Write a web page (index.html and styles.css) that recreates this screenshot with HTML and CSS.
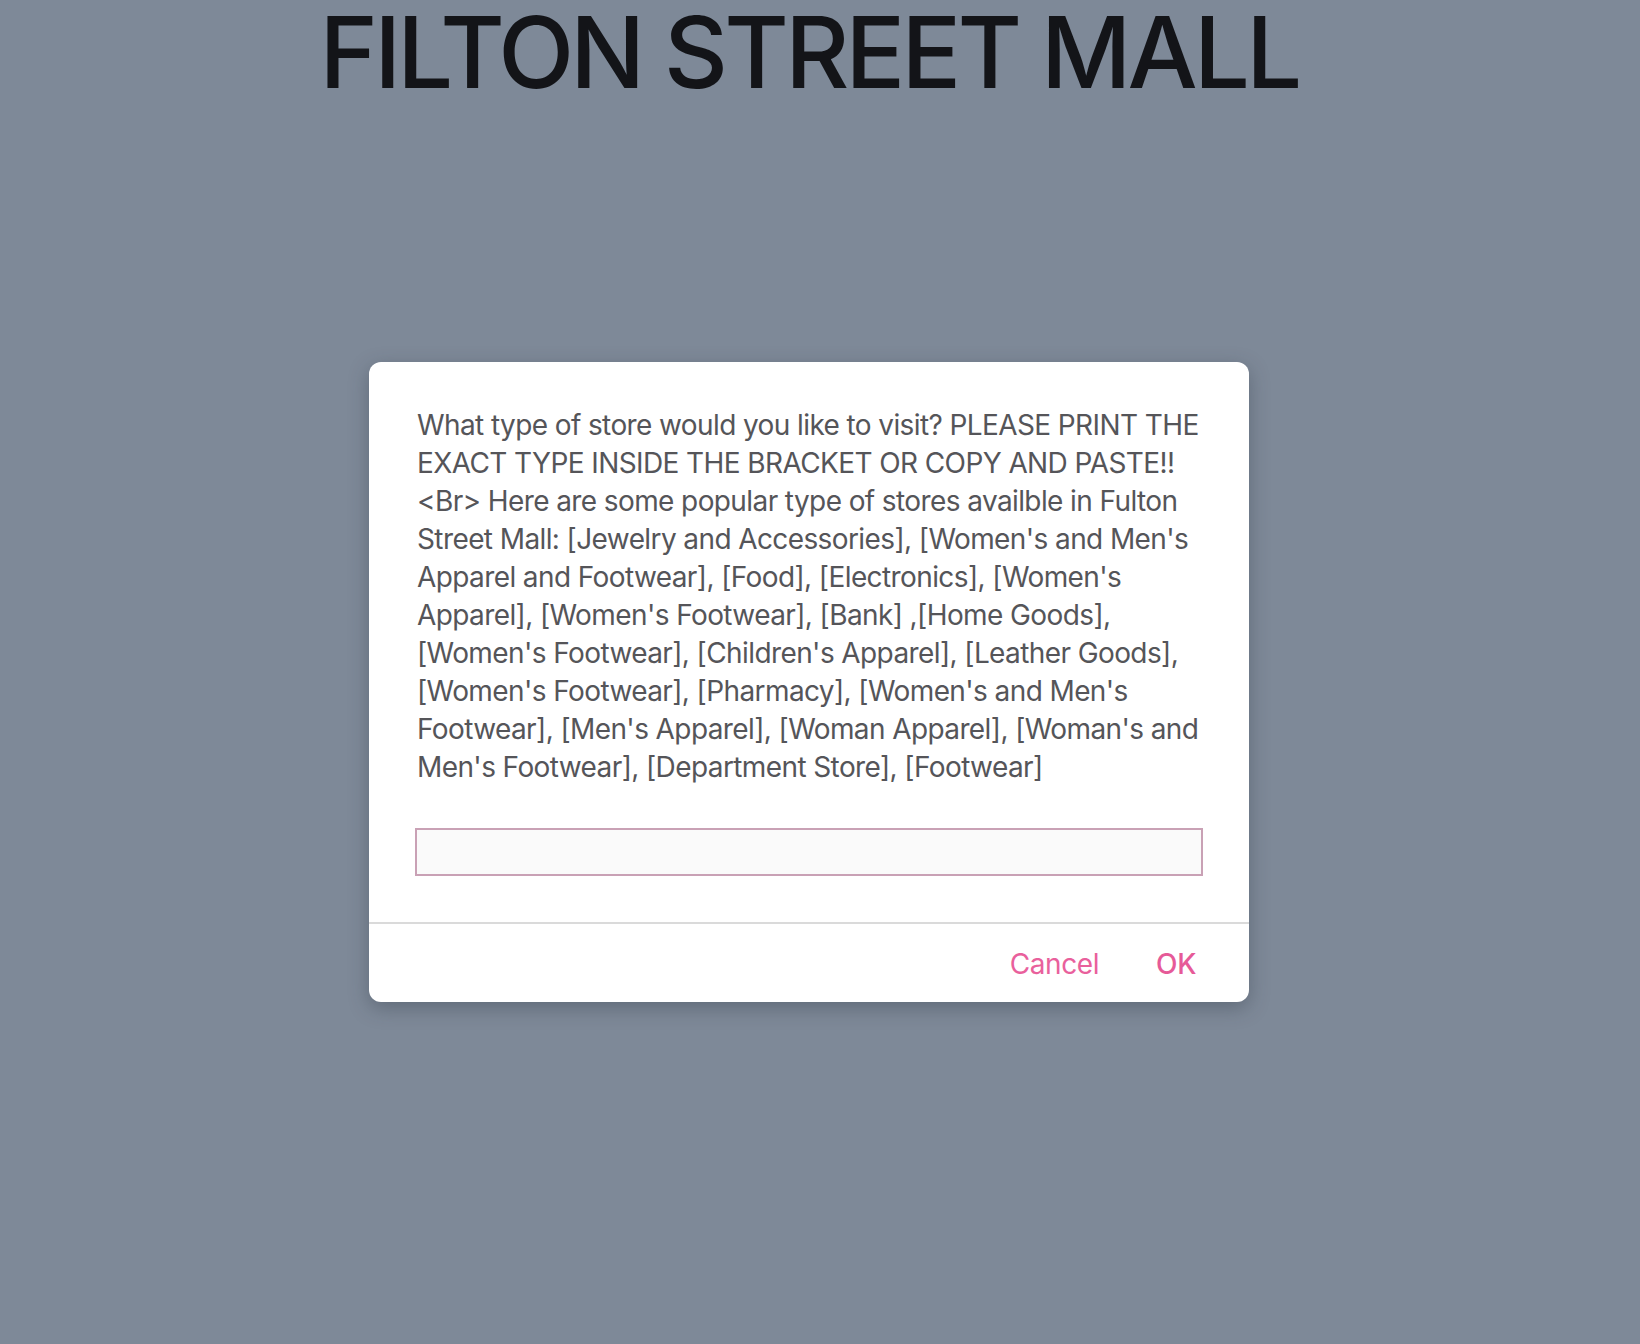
FILE: index.html
```html
<!DOCTYPE html>
<html lang="en">
<head>
<meta charset="utf-8">
<title>Filton Street Mall</title>
<link rel="stylesheet" href="styles.css">
</head>
<body>
<div class="page">
  <h1 class="title">FILTON STREET MALL</h1>
  <div class="dialog">
    <div class="dialog-body">
      <p class="message">What type of store would you like to visit? PLEASE PRINT THE<br>EXACT TYPE INSIDE THE BRACKET OR COPY AND PASTE!!<br>&lt;Br&gt; Here are some popular type of stores availble in Fulton<br>Street Mall: [Jewelry and Accessories], [Women's and Men's<br>Apparel and Footwear], [Food], [Electronics], [Women's<br>Apparel], [Women's Footwear], [Bank] ,[Home Goods],<br>[Women's Footwear], [Children's Apparel], [Leather Goods],<br>[Women's Footwear], [Pharmacy], [Women's and Men's<br>Footwear], [Men's Apparel], [Woman Apparel], [Woman's and<br>Men's Footwear], [Department Store], [Footwear]</p>
      <input class="field" type="text">
    </div>
    <div class="dialog-footer">
      <button class="btn btn-cancel" type="button">Cancel</button>
      <button class="btn btn-ok" type="button">OK</button>
    </div>
  </div>
</div>
</body>
</html>
```
FILE: styles.css
```css
html, body {
  margin: 0;
  padding: 0;
  background: #7e8998;
}
body {
  font-family: Inter, "Noto Sans", "Liberation Sans", sans-serif;
  height: 1344px;
  overflow: hidden;
}
.page {
  width: 1618px;
  display: flex;
  flex-direction: column;
  align-items: center;
}
.title {
  margin: 0;
  font-size: 99px;
  line-height: 104px;
  font-weight: 500;
  color: #131418;
  letter-spacing: -3.75px;
  white-space: nowrap;
}
.dialog {
  margin-top: 258px;
  width: 880px;
  background: #fff;
  border-radius: 12px;
  box-shadow: 0 6px 20px rgba(40, 48, 60, 0.35);
}
.dialog-body {
  padding: 44px 46px 46px;
}
.message {
  margin: 0;
  padding-left: 2px;
  font-size: 28px;
  line-height: 38px;
  color: #555559;
  letter-spacing: -0.6px;
  white-space: nowrap;
}
.field {
  display: block;
  box-sizing: border-box;
  margin-top: 42px;
  width: 788px;
  height: 48px;
  border: 2px solid #c9a1b5;
  background: #fafafa;
  outline: none;
  padding: 0 12px;
  font: inherit;
}
.dialog-footer {
  border-top: 2px solid #dadada;
  display: flex;
  justify-content: flex-end;
  gap: 57px;
  padding: 21px 53px 19px 0;
}
.btn {
  border: 0;
  background: none;
  padding: 0;
  font-family: inherit;
  font-size: 28px;
  line-height: 38px;
  letter-spacing: -0.4px;
  color: #e9609c;
  cursor: pointer;
}
.btn-ok {
  font-weight: 500;
  color: #e65a98;
}
```
